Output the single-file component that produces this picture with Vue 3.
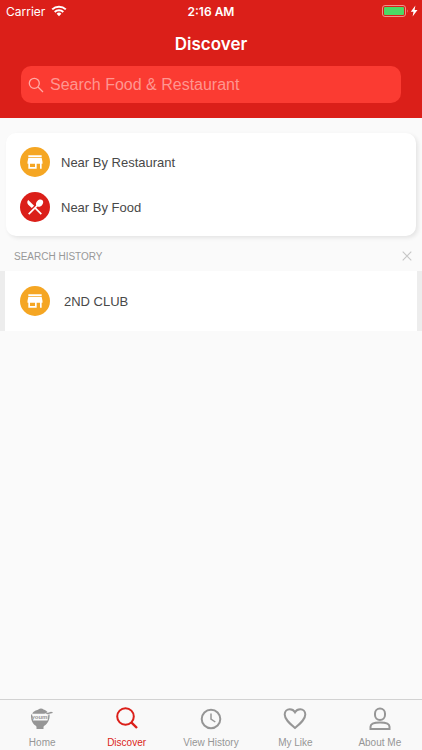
<script setup>
import { ref } from 'vue'

const query = ref('')
const shortcuts = [
  { label: 'Near By Restaurant', icon: 'store' },
  { label: 'Near By Food', icon: 'food' },
]
const history = ref(['2ND CLUB'])
const tabs = [
  { label: 'Home', icon: 'home' },
  { label: 'Discover', icon: 'search', active: true },
  { label: 'View History', icon: 'clock' },
  { label: 'My Like', icon: 'heart' },
  { label: 'About Me', icon: 'person' },
]
const storePath =
  'M20 4H4v2h16V4zm1 10v-2l-1-5H4l-1 5v2h1v6h10v-6h4v6h2v-6h1zm-9 4H6v-4h6v4z'
const foodPath =
  'M8.1 13.34l2.83-2.83L3.91 3.5c-1.56 1.56-1.56 4.09 0 5.66l4.19 4.18zm6.78-1.81c1.53.71 3.68.21 5.27-1.38 1.91-1.91 2.28-4.65.81-6.12-1.46-1.46-4.2-1.1-6.12.81-1.59 1.59-2.09 3.74-1.38 5.27L3.7 19.87l1.41 1.41L12 14.41l6.88 6.88 1.41-1.41L13.41 13l1.47-1.47z'
</script>

<template>
  <div class="screen">
    <header class="header">
      <div class="status">
        <div class="carrier">
          <span>Carrier</span>
          <svg width="16" height="12" viewBox="0 0 16 12" fill="none" stroke="#fff" stroke-width="2">
            <path d="M1.2 4.4a9.8 9.8 0 0 1 13.6 0" />
            <path d="M3.7 7a6.2 6.2 0 0 1 8.6 0" />
            <path d="M8 11.2L5.6 8.8a3.4 3.4 0 0 1 4.8 0z" fill="#fff" stroke="none" />
          </svg>
        </div>
        <span class="time">2:16 AM</span>
        <div class="power">
          <svg width="36" height="12" viewBox="0 0 36 12">
            <rect x="0.5" y="0.5" width="23" height="11" rx="2.5" fill="none" stroke="#f0908a" />
            <rect x="2" y="2" width="20" height="8" rx="1" fill="#4cd964" />
            <path d="M25 4.2q1.4 1.8 0 3.6z" fill="#f0908a" />
            <path d="M33.4 .6L28.800 6.800h2.700L30.600 11.400l4.900-6.400h-2.900z" fill="#fff" />
          </svg>
        </div>
      </div>
      <h1 class="title">Discover</h1>
      <label class="search">
        <svg width="16" height="16" viewBox="0 0 16 16" fill="none" stroke="#ffaaa5" stroke-width="1.3">
          <circle cx="6.3" cy="6.3" r="5" />
          <path d="M10 10l5 5" />
        </svg>
        <input v-model="query" type="search" placeholder="Search Food &amp; Restaurant" aria-label="Search Food &amp; Restaurant" />
      </label>
    </header>

    <main class="content">
      <nav class="card">
        <a v-for="item in shortcuts" :key="item.label" href="#" class="row">
          <span class="badge" :class="item.icon">
            <svg width="20" height="20" viewBox="0 0 24 24" fill="#fff">
              <path :d="item.icon === 'store' ? storePath : foodPath" />
            </svg>
          </span>
          <span>{{ item.label }}</span>
        </a>
      </nav>

      <section>
        <div class="section-head">
          <h2>SEARCH HISTORY</h2>
          <button type="button" class="clear" aria-label="Clear search history" @click="history = []">
            <svg width="10" height="10" viewBox="0 0 10 10" fill="none" stroke="#c6c6c6" stroke-width="1.1">
              <path d="M.7.7l8.6 8.6M9.3.7L.7 9.3" />
            </svg>
          </button>
        </div>
        <div class="history">
          <a v-for="name in history" :key="name" href="#" class="row past">
            <span class="badge store">
              <svg width="20" height="20" viewBox="0 0 24 24" fill="#fff"><path :d="storePath" /></svg>
            </span>
            <span>{{ name }}</span>
          </a>
        </div>
      </section>
    </main>

    <nav class="tabs">
      <a v-for="tab in tabs" :key="tab.label" href="#" class="tab" :class="{ active: tab.active }">
        <svg width="24" height="24" viewBox="0 0 24 24" fill="none" stroke="currentColor" stroke-width="2">
          <g v-if="tab.icon === 'home'" stroke="none" fill="currentColor">
            <path d="M2.300 7.700C3.500 4.800 6 4.600 8.300 3.500 10 2.200 12.200 2.300 13.500 3.500c2 .7 3.500 1.600 4.200 2.700l-3.500 1.500z" />
            <path d="M15 7.700l6-1.900 1.700.5v.7l-5 1.200z" />
            <path d="M1 8.500h1.200c0 2.200.3 4.300.9 6h14.300c.7-1.700 1-3.800 1-6h1.200c.2 5.500-2 9.300-5.300 11.200L13.500 20.800V23h-7v-2.200L5.800 19.700C2.500 17.800.8 14 1 8.500z" />
            <text x="10.300" y="12.900" class="brand" text-anchor="middle">youmi</text>
          </g>
          <g v-else-if="tab.icon === 'search'">
            <circle cx="10.500" cy="10.500" r="8.300" />
            <path d="M16.300 16.300l5.700 5.700" stroke-width="2.400" />
          </g>
          <g v-else-if="tab.icon === 'clock'">
            <circle cx="12" cy="13" r="9.300" />
            <path d="M12 7.500V13l4.300 3" stroke-width="1.500" />
          </g>
          <path
            v-else-if="tab.icon === 'heart'"
            d="M12 22C5.500 16.500 1.700 12.800 1.700 8.500 1.700 5.300 4 3.200 6.700 3.200c2.200 0 4.200 1.100 5.300 3 1.100-1.900 3.100-3 5.300-3 2.700 0 5 2.100 5 5.300 0 4.300-3.800 8-10.300 13.500z"
          />
          <g v-else>
            <rect x="7" y="2.500" width="10" height="11.500" rx="5" />
            <path d="M2.500 23v-2.300c0-3 4.200-4.200 9.500-4.200s9.500 1.200 9.500 4.200V23z" />
          </g>
        </svg>
        <span>{{ tab.label }}</span>
      </a>
    </nav>
  </div>
</template>

<style>
body {
  background: #fafafa;
}
</style>

<style scoped>
.screen {
  display: flex;
  flex-direction: column;
  min-height: 100vh;
  font-family: "Liberation Sans", Arial, sans-serif;
  color: #484848;
}

a {
  color: inherit;
  text-decoration: none;
}

.header {
  padding: 0 21px 15px;
  background: #db1f19;
  color: #fff;
}

.status {
  display: grid;
  grid-template-columns: 1fr auto 1fr;
  align-items: center;
  height: 22px;
  margin: 0 -15px;
  font-family: Inter, "Liberation Sans", sans-serif;
  font-size: 12px;
}

.carrier {
  display: flex;
  align-items: center;
  gap: 6px;
}

.time {
  font-weight: 600;
}

.power {
  display: flex;
  justify-content: flex-end;
  margin-right: -2px;
}

.title {
  margin: 0;
  font-family: Inter, "Liberation Sans", sans-serif;
  font-size: 17px;
  font-weight: 600;
  line-height: 44px;
  text-align: center;
}

.search {
  display: flex;
  align-items: center;
  gap: 6px;
  height: 37px;
  padding: 0 7px;
  border-radius: 10px;
  background: #fb3b32;
}

.search input {
  flex: 1;
  min-width: 0;
  padding: 0;
  border: 0;
  outline: 0;
  background: none;
  color: #fff;
  font: inherit;
  font-size: 16px;
  appearance: none;
}

.search input::placeholder {
  color: #ff9690;
  opacity: 1;
}

.content {
  flex: 1;
}

.card {
  display: flex;
  flex-direction: column;
  gap: 15px;
  margin: 15px 6px 0;
  padding: 14px;
  border-radius: 10px;
  background: #fff;
  box-shadow: 2px 2px 4px rgba(0, 0, 0, 0.09);
}

.row {
  display: flex;
  align-items: center;
  gap: 11px;
  font-size: 13px;
}

.badge {
  display: grid;
  place-items: center;
  width: 30px;
  height: 30px;
  border-radius: 50%;
}

.store {
  background: #f5a623;
}

.food {
  background: #db1f19;
}

.section-head {
  display: flex;
  align-items: center;
  justify-content: space-between;
  height: 35px;
  padding: 5px 10px 0 14px;
  box-sizing: border-box;
}

.section-head h2 {
  margin: 0;
  font-size: 10px;
  font-weight: 400;
  color: #989898;
}

.clear {
  display: flex;
  padding: 0;
  border: 0;
  background: none;
}

.history {
  border: solid #ededed;
  border-width: 0 5px;
  background: #fff;
}

.past {
  gap: 14px;
  padding: 15px;
}

.tabs {
  display: grid;
  grid-template-columns: repeat(5, 1fr);
  height: 51px;
  border-top: 1px solid #d2d2d2;
  box-sizing: border-box;
  background: #f9f9f9;
}

.tab {
  display: flex;
  flex-direction: column;
  align-items: center;
  gap: 6px;
  padding-top: 6px;
  font-size: 10px;
  line-height: 14px;
  white-space: nowrap;
  color: #969696;
}

.tab.active {
  color: #db1f19;
}

.brand {
  font-size: 6px;
  font-weight: 700;
}
</style>
